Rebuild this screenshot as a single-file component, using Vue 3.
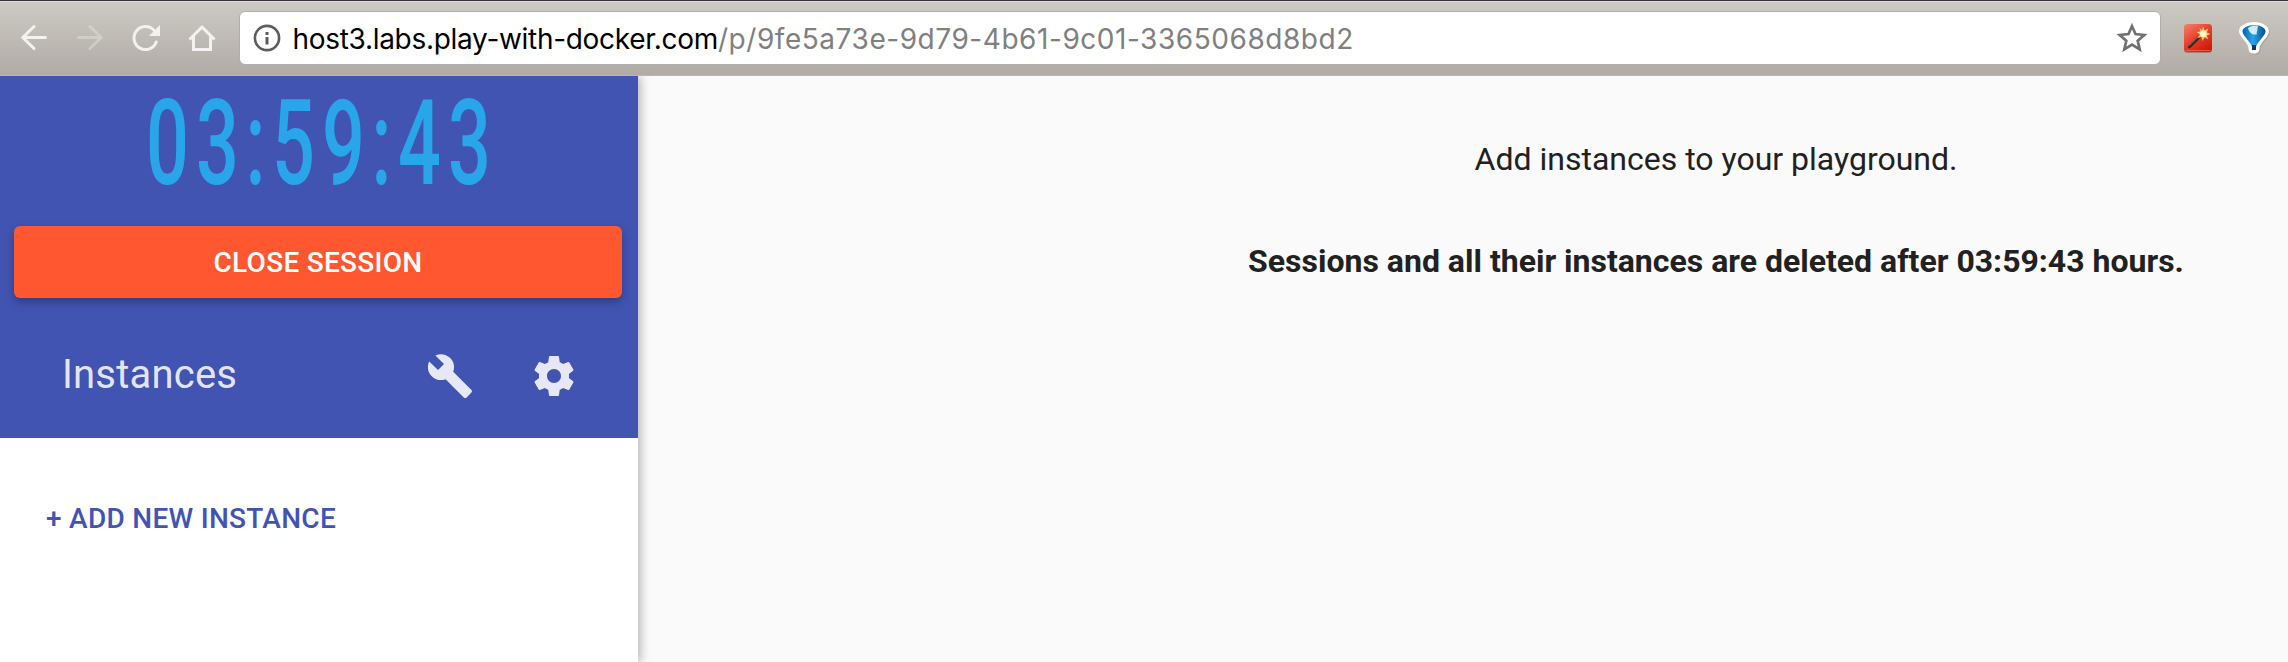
<script setup>
const time = '03:59:43'
const host = 'host3.labs.play-with-docker.com'
const path = '/p/9fe5a73e-9d79-4b61-9c01-3365068d8bd2'
</script>

<template>
  <div class="window">
    <header class="browser">
      <nav class="nav">
        <svg width="56" height="56" viewBox="0 0 56 56" class="nav-icon"><path d="M45.5 27.5H23M34 16.5 22.8 27.5 34 38.5" /></svg>
        <svg width="56" height="56" viewBox="0 0 56 56" class="nav-icon faded"><path d="M22.5 27.5H45M34 16.5 45.200 27.5 34 38.5" /></svg>
        <svg width="56" height="56" viewBox="0 0 56 56" class="nav-icon"><path d="M44.300 32A11.500 11.500 0 1 1 42 20.300" /><path class="solid" d="M48 15v11H37z" /></svg>
        <svg width="56" height="56" viewBox="0 0 56 56" class="nav-icon"><path d="M22.500 28.500 34 17 45.500 28.500" /><path d="M25.500 27v12.500h17V27" /></svg>
      </nav>
      <div class="omnibox">
        <svg class="info" width="28" height="28" viewBox="0 0 28 28"><circle cx="14" cy="14" r="12.100" fill="none" stroke="#5c5c5e" stroke-width="2.600" /><path d="M12.500 8h3v3h-3zM12.500 13h3v7.500h-3z" fill="#5c5c5e" /></svg>
        <div class="url"><span class="host">{{ host }}</span><span class="path">{{ path }}</span></div>
        <svg class="star" width="32" height="32" viewBox="0 0 32 32"><path d="M16 4.200 19.500 12.100 28.300 13 21.700 18.700 23.700 27.300 16 22.600 8.300 27.300 10.300 18.700 3.700 13 12.500 12.100z" fill="none" stroke="#707070" stroke-width="2.700" /></svg>
      </div>
      <svg class="wand" width="32" height="32" viewBox="0 0 32 32">
        <defs><linearGradient id="red" x1="0" y1="0" x2="0.700" y2="1"><stop offset="0" stop-color="#f5826b" /><stop offset="0.500" stop-color="#e8432f" /><stop offset="1" stop-color="#cf1a0e" /></linearGradient></defs>
        <rect x="2" y="3" width="28" height="28" rx="3.500" fill="#9a4a3e" opacity="0.500" />
        <rect x="2" y="2" width="28" height="28" rx="3.500" fill="url(#red)" />
        <path d="M4 28.500h24" stroke="#ee6a55" stroke-width="0.800" />
        <path d="M7.300 25 19 13.500" stroke="#2e2a1c" stroke-width="2.600" stroke-linecap="round" />
        <path d="M7.500 23.500 17.500 13.800" stroke="#8b8460" stroke-width="0.700" />
        <path d="M21 4.500 22.600 8.600 26.300 6.500 24.800 10.400 28.500 12 24.800 13.400 26.200 17.300 22.600 15.200 20.500 19 19.500 14.900 15.500 16 17.900 12.500 14.500 10 18.500 9.500 17.300 5.800 20.200 8.300z" fill="#fbc766" />
        <circle cx="21.300" cy="11.700" r="3.200" fill="#fff8d0" />
      </svg>
      <svg class="balloon" width="34" height="36" viewBox="0 0 34 36">
        <defs><linearGradient id="blue" x1="0" y1="0" x2="1" y2="0"><stop offset="0" stop-color="#075fae" /><stop offset="0.450" stop-color="#25a5eb" /><stop offset="1" stop-color="#064d91" /></linearGradient></defs>
        <path d="M17 2C9 2 2 6 2 11c0 6 9 11 9.500 17 .2 4 1.500 5.500 5.500 5.500s5.300-1.500 5.500-5.500C23 22 32 17 32 11 32 6 25 2 17 2z" fill="#8c8780" opacity="0.450" transform="translate(1 1)" />
        <path d="M17 2C9 2 2 6 2 11c0 6 9 11 9.500 17 .2 4 1.500 5.500 5.500 5.500s5.300-1.500 5.500-5.500C23 22 32 17 32 11 32 6 25 2 17 2z" fill="#fff" />
        <path d="M17 5C10 5 5.500 8 5.500 11.500c0 4 8.500 10.500 9.500 15.500v3h4v-3c1-5 9.500-11.500 9.500-15.500C28.500 8 24 5 17 5z" fill="url(#blue)" />
        <path d="M11 8c3-2.300 8-2.600 10-2l-1.500 8.500c-4 .5-7-1-8.500-6.500z" fill="#fff" opacity="0.800" />
        <path d="M15 25h4v5h-4z" fill="#0b3663" />
      </svg>
    </header>

    <div class="body">
      <aside class="sidebar">
        <div class="head">
          <div class="clock"><span v-for="(c, i) in time" :key="i" class="cell" :class="{ colon: c === ':' }"><span class="digit">{{ c }}</span></span></div>
          <button class="close">CLOSE SESSION</button>
          <div class="tools">
            <h1>Instances</h1>
            <svg width="48" height="48" viewBox="0 0 24 24"><path d="M22.700 19l-9.100-9.100c.9-2.300.4-5-1.500-6.900-2-2-5-2.400-7.400-1.300L9 6 6 9 1.600 4.700C.4 7.100.9 10.100 2.900 12.100c1.900 1.900 4.600 2.400 6.900 1.500l9.100 9.100c.4.400 1 .400 1.400 0l2.300-2.300c.5-.400.5-1.100.1-1.400z" /></svg>
            <svg width="48" height="48" viewBox="0 0 24 24"><path d="M19.430 12.980c.04-.32.07-.64.07-.98s-.03-.66-.07-.98l2.110-1.650c.19-.15.24-.42.12-.64l-2-3.460c-.12-.22-.39-.3-.61-.22l-2.490 1c-.52-.4-1.080-.73-1.690-.98l-.38-2.650C14.460 2.180 14.250 2 14 2h-4c-.25 0-.46.18-.49.42l-.38 2.650c-.61.25-1.170.59-1.690.98l-2.490-1c-.23-.09-.49 0-.61.22l-2 3.460c-.13.22-.07.49.12.64l2.110 1.650c-.04.32-.07.65-.07.98s.03.66.07.98l-2.110 1.650c-.19.15-.24.42-.12.64l2 3.460c.12.22.39.3.61.22l2.490-1c.52.4 1.080.73 1.690.98l.38 2.650c.03.24.24.42.49.42h4c.25 0 .46-.18.49-.42l.38-2.650c.61-.25 1.170-.59 1.690-.98l2.490 1c.23.09.49 0 .61-.22l2-3.460c.12-.22.07-.49-.12-.64l-2.110-1.650zM12 15.500c-1.930 0-3.500-1.570-3.500-3.500s1.570-3.500 3.500-3.500 3.500 1.570 3.500 3.500-1.570 3.500-3.500 3.500z" /></svg>
          </div>
        </div>
        <button class="add">+ ADD NEW INSTANCE</button>
      </aside>
      <main class="content">
        <p>Add instances to your playground.</p>
        <p class="strong">Sessions and all their instances are deleted after {{ time }} hours.</p>
      </main>
    </div>
  </div>
</template>

<style>
body { overflow: hidden; }
</style>

<style scoped>
.window {
  width: 2288px;
  height: 662px;
  display: flex;
  flex-direction: column;
  font-family: Roboto, sans-serif;
  background: #fafafa;
}
.browser {
  box-sizing: border-box;
  height: 76px;
  flex: none;
  display: flex;
  align-items: flex-start;
  border-top: 1px solid #37323a;
  border-bottom: 1px solid #bab6b1;
  background: linear-gradient(#dedbd7 0 1px, #cdc9c3 1px, #b0aba5 100%);
}
.nav { display: flex; padding-top: 9px; width: 239px; flex: none; }
.nav-icon { flex: none; fill: none; stroke: #f3f2f0; stroke-width: 3; stroke-linecap: round; }
.nav-icon:last-child { stroke-linecap: square; }
.nav-icon .solid { fill: #f3f2f0; stroke: none; }
.faded { opacity: 0.350; }
.omnibox {
  box-sizing: border-box;
  margin-top: 10px;
  width: 1922px;
  height: 54px;
  flex: none;
  display: flex;
  align-items: center;
  background: #fff;
  border: 1px solid #b0aeab;
  border-radius: 6px;
  padding: 0 12px 0 12.500px;
}
.info { flex: none; }
.url {
  flex: 1;
  margin-left: 12px;
  padding-top: 2px;
  font: 28px/52px Inter, sans-serif;
  white-space: nowrap;
}
.host { color: #000; letter-spacing: -0.300px; }
.path { color: #808080; letter-spacing: 0.550px; }
.star { flex: none; }
.wand { margin: 21px 0 0 21px; flex: none; }
.balloon { margin: 19px 0 0 23px; flex: none; }
.body { flex: 1; display: flex; min-height: 0; }
.sidebar {
  width: 638px;
  flex: none;
  background: #fff;
  box-shadow: 2px 0 10px rgba(0, 0, 0, 0.300);
  clip-path: inset(0 -30px 0 0);
  z-index: 1;
}
.head { height: 362px; background: #4254b2; display: flow-root; }
.clock {
  display: flex;
  height: 150px;
  padding-left: 143px;
  color: #29a5ea;
  font: 500 118px/136px Roboto, sans-serif;
}
.cell { width: 50px; display: flex; justify-content: center; }
.colon { width: 26px; }
.digit { transform: scaleX(0.640); }
.close {
  display: block;
  width: 608px;
  height: 72px;
  margin: 0 0 0 14px;
  padding: 1px 0 0;
  border: 0;
  border-radius: 6px;
  background: #ff5830;
  color: #fff;
  font: 500 28px/71px Roboto, sans-serif;
  letter-spacing: 0.280px;
  box-shadow: 0 4px 10px rgba(0, 0, 0, 0.300);
}
.tools {
  display: flex;
  align-items: center;
  gap: 56px;
  height: 124px;
  margin-top: 16px;
  padding: 0 60px 0 62px;
  fill: rgba(255, 255, 255, 0.870);
}
h1 {
  margin: 0;
  padding-bottom: 2px;
  flex: 1;
  color: rgba(255, 255, 255, 0.870);
  font: 400 40px/52px Roboto, sans-serif;
  letter-spacing: 0.200px;
}
.add {
  display: block;
  margin: 45px 0 0 46px;
  padding: 0;
  border: 0;
  background: none;
  color: #4254b2;
  font: 500 28px/72px Roboto, sans-serif;
  letter-spacing: 0.280px;
}
.content {
  flex: 1;
  padding-top: 64px;
  padding-left: 506px;
  text-align: center;
  color: #212121;
  font-size: 32px;
  line-height: 38px;
}
p { margin: 0; }
.strong { font-weight: 700; margin-top: 64px; }
</style>
